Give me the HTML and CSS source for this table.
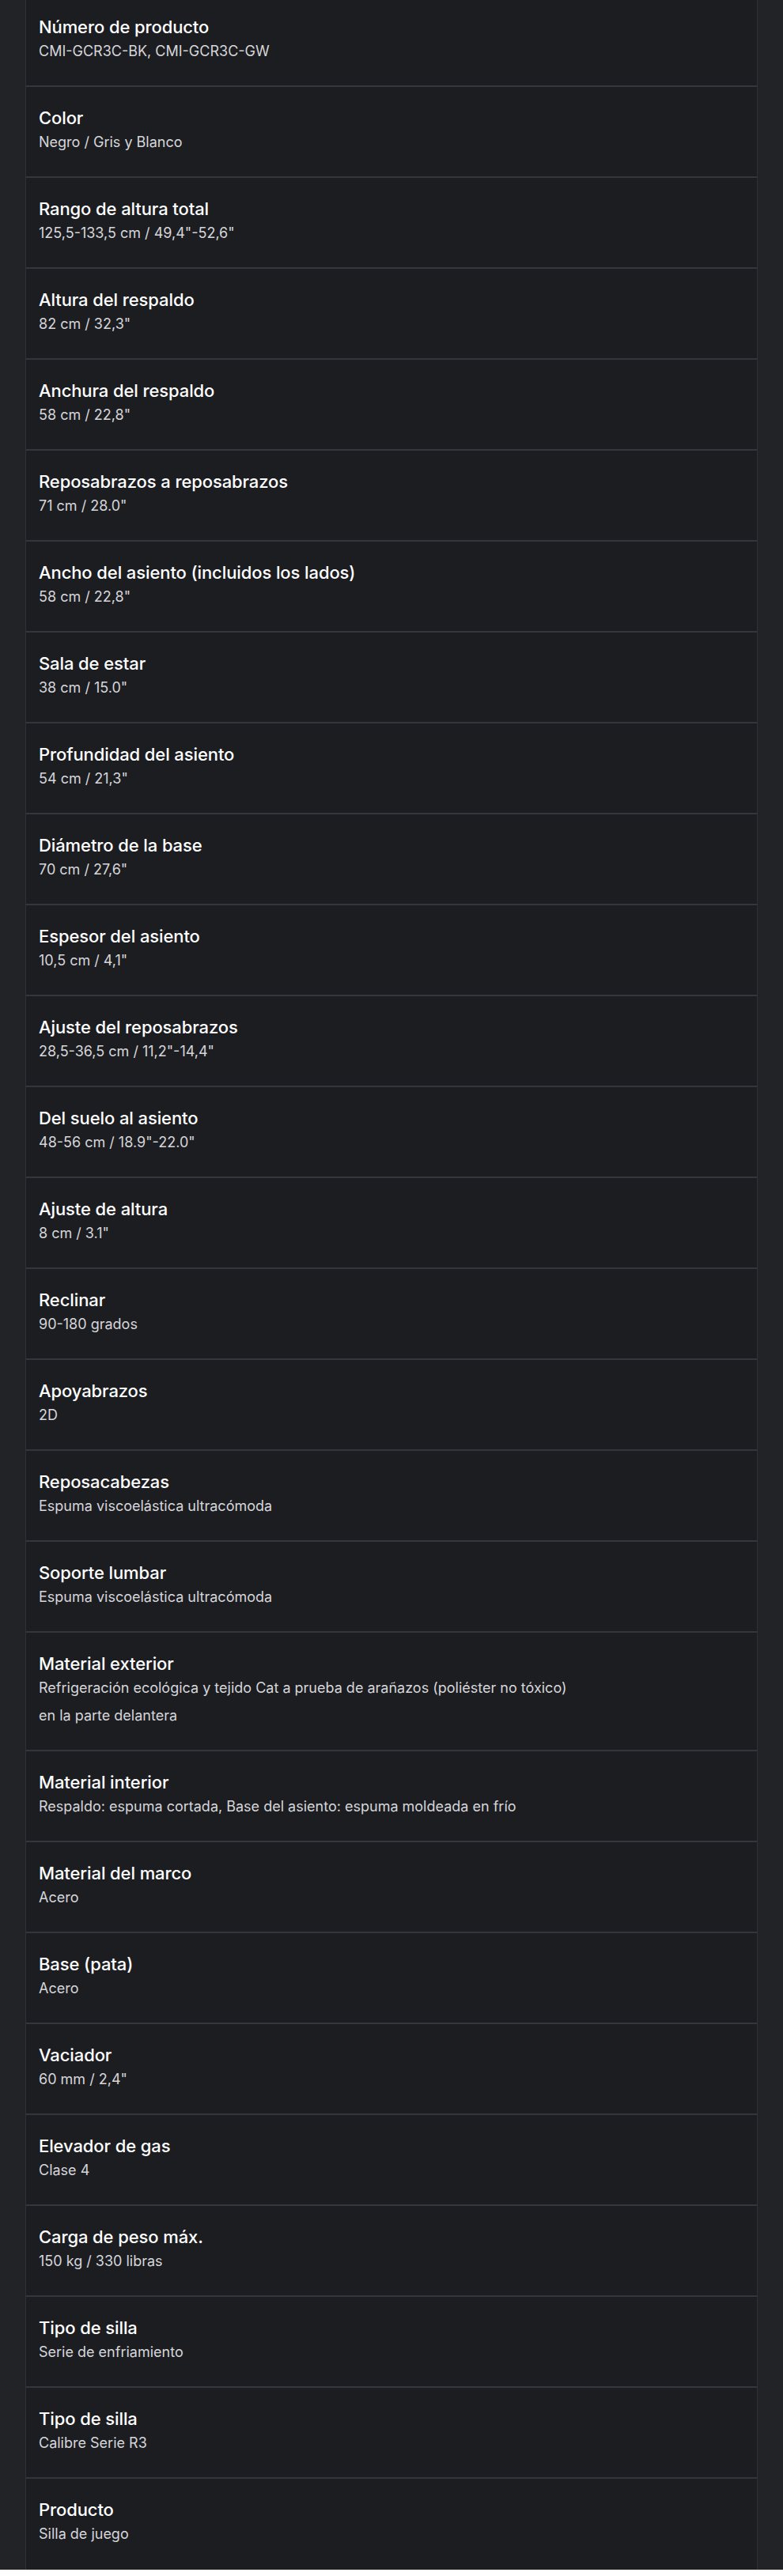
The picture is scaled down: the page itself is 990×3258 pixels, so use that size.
FILE: index.html
```html
<!DOCTYPE html>
<html lang="es">
<head>
<meta charset="utf-8">
<title>Especificaciones</title>
<link rel="stylesheet" href="styles.css">
</head>
<body>
<div class="page">
  <ul class="specs">
    <li class="spec"><div class="label">Número de producto</div><div class="value">CMI-GCR3C-BK, CMI-GCR3C-GW</div></li>
    <li class="spec"><div class="label">Color</div><div class="value">Negro / Gris y Blanco</div></li>
    <li class="spec"><div class="label">Rango de altura total</div><div class="value">125,5-133,5 cm / 49,4"-52,6"</div></li>
    <li class="spec"><div class="label">Altura del respaldo</div><div class="value">82 cm / 32,3"</div></li>
    <li class="spec"><div class="label">Anchura del respaldo</div><div class="value">58 cm / 22,8"</div></li>
    <li class="spec"><div class="label">Reposabrazos a reposabrazos</div><div class="value">71 cm / 28.0"</div></li>
    <li class="spec"><div class="label">Ancho del asiento (incluidos los lados)</div><div class="value">58 cm / 22,8"</div></li>
    <li class="spec"><div class="label">Sala de estar</div><div class="value">38 cm / 15.0"</div></li>
    <li class="spec"><div class="label">Profundidad del asiento</div><div class="value">54 cm / 21,3"</div></li>
    <li class="spec"><div class="label">Diámetro de la base</div><div class="value">70 cm / 27,6"</div></li>
    <li class="spec"><div class="label">Espesor del asiento</div><div class="value">10,5 cm / 4,1"</div></li>
    <li class="spec"><div class="label">Ajuste del reposabrazos</div><div class="value">28,5-36,5 cm / 11,2"-14,4"</div></li>
    <li class="spec"><div class="label">Del suelo al asiento</div><div class="value">48-56 cm / 18.9"-22.0"</div></li>
    <li class="spec"><div class="label">Ajuste de altura</div><div class="value">8 cm / 3.1"</div></li>
    <li class="spec"><div class="label">Reclinar</div><div class="value">90-180 grados</div></li>
    <li class="spec"><div class="label">Apoyabrazos</div><div class="value">2D</div></li>
    <li class="spec"><div class="label">Reposacabezas</div><div class="value">Espuma viscoelástica ultracómoda</div></li>
    <li class="spec"><div class="label">Soporte lumbar</div><div class="value">Espuma viscoelástica ultracómoda</div></li>
    <li class="spec"><div class="label">Material exterior</div><div class="value">Refrigeración ecológica y tejido Cat a prueba de arañazos (poliéster no tóxico)</div><div class="value value-more">en la parte delantera</div></li>
    <li class="spec"><div class="label">Material interior</div><div class="value">Respaldo: espuma cortada, Base del asiento: espuma moldeada en frío</div></li>
    <li class="spec"><div class="label">Material del marco</div><div class="value">Acero</div></li>
    <li class="spec"><div class="label">Base (pata)</div><div class="value">Acero</div></li>
    <li class="spec"><div class="label">Vaciador</div><div class="value">60 mm / 2,4"</div></li>
    <li class="spec"><div class="label">Elevador de gas</div><div class="value">Clase 4</div></li>
    <li class="spec"><div class="label">Carga de peso máx.</div><div class="value">150 kg / 330 libras</div></li>
    <li class="spec"><div class="label">Tipo de silla</div><div class="value">Serie de enfriamiento</div></li>
    <li class="spec"><div class="label">Tipo de silla</div><div class="value">Calibre Serie R3</div></li>
    <li class="spec"><div class="label">Producto</div><div class="value">Silla de juego</div></li>
  </ul>
</div>
</body>
</html>
```

FILE: styles.css
```css
html {
  background: #ffffff;
}

body {
  margin: 0 0 8px 0;
  background: #222327;
  font-family: Inter, "Noto Sans", "Liberation Sans", sans-serif;
  color: #ffffff;
  overflow: hidden;
}

.page {
  padding: 0 32px;
}

.specs {
  list-style: none;
  margin: -5px 0 0 0;
  padding: 0;
  background: #1c1d21;
  border-left: 1px solid #303137;
  border-right: 1px solid #303137;
}

.spec {
  padding: 23px 16px 28px 16px;
  border-bottom: 2px solid #34353d;
}

.spec:last-child {
  border-bottom: none;
  padding-bottom: 30px;
}

.label {
  font-size: 22px;
  line-height: 32px;
  font-weight: 500;
  color: #ffffff;
  letter-spacing: -0.1px;
}

.value {
  font-size: 18px;
  line-height: 30px;
  font-weight: 400;
  color: #d6d6da;
}

.value-more {
  margin-top: 5px;
}
```
